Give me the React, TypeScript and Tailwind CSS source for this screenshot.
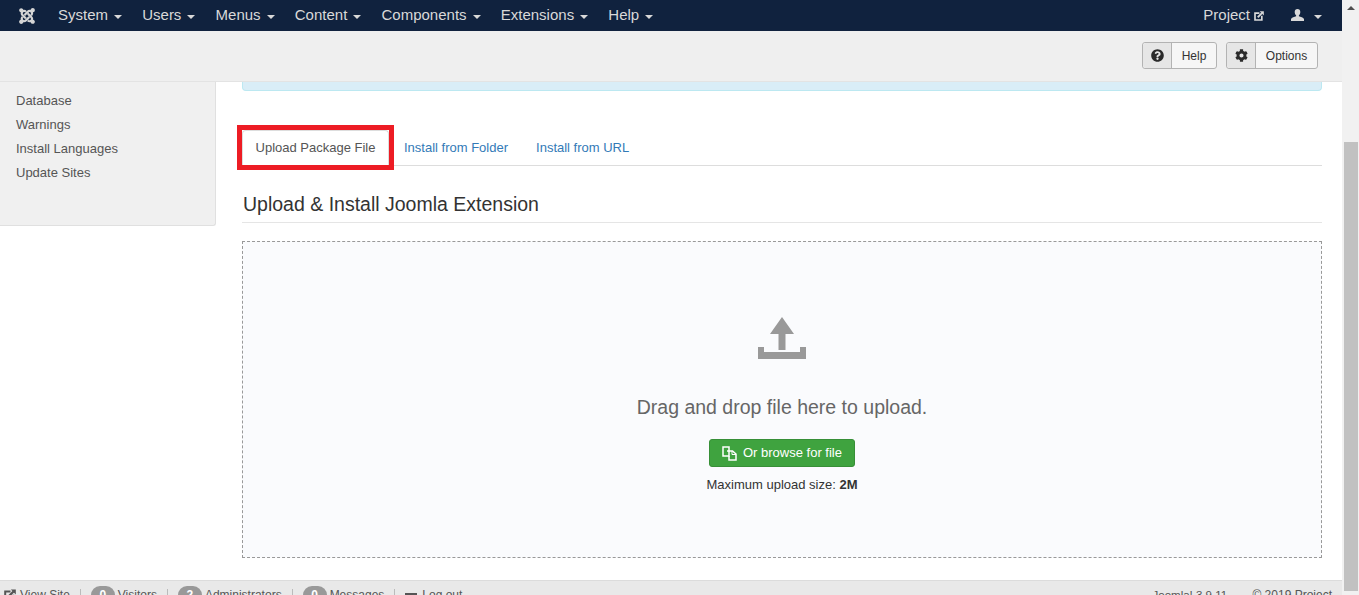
import { FaJoomla, FaQuestionCircle, FaCog } from "react-icons/fa";

function Caret({ className = "" }: { className?: string }) {
  return <span className={`inline-block w-0 h-0 border-x-[4px] border-x-transparent border-t-[4px] ${className}`} />;
}

function NewTab({ className = "", size = 11 }: { className?: string; size?: number }) {
  return (
    <svg width={size} height={size} viewBox="0 0 12 12" className={className} fill="none" stroke="currentColor">
      <path d="M6.5 2.6H1.2v8.2h8.2V5.8" strokeWidth="2" />
      <path d="M4.5 7.5L9.5 2.5" strokeWidth="2.2" />
      <path d="M6.8 0.4h5v5z" fill="currentColor" stroke="none" />
    </svg>
  );
}

function UserGlyph({ className = "" }: { className?: string }) {
  return (
    <svg width="13" height="12" viewBox="0 0 13 12" className={className} fill="currentColor">
      <path d="M6.5 0C4.7 0 3.7 1.2 3.7 3c0 1.4.6 2.6 1.4 3.3v1C3.5 8 .6 8.6 0 10v2h13v-2c-.6-1.4-3.5-2-5.1-2.7v-1C8.7 5.6 9.3 4.4 9.3 3c0-1.8-1-3-2.8-3z" />
    </svg>
  );
}

function CopyGlyph({ className = "" }: { className?: string }) {
  return (
    <svg width="15" height="15" viewBox="0 0 15 15" className={className} fill="none" stroke="currentColor" strokeWidth="1.5">
      <path d="M1 1H7V10H1z" />
      <path d="M5 5H10.5L14 8V14H7V10" />
      <path d="M10 5V8.5H14" strokeWidth="1" />
    </svg>
  );
}

const menus = ["System", "Users", "Menus", "Content", "Components", "Extensions", "Help"];
const sideLinks = ["Database", "Warnings", "Install Languages", "Update Sites"];

function Badge({ n }: { n: string }) {
  return (
    <span className="inline-flex items-center justify-center w-[24px] h-[18px] rounded-[9px] bg-[#999999] text-white text-[12px] font-bold">{n}</span>
  );
}

function Sep() {
  return <span className="w-px h-[12px] bg-[#bbbbbb] mx-[10px]" />;
}

export default function App() {
  return (
    <div className="flex h-[595px] w-[1359px] overflow-hidden bg-white font-['Liberation_Sans',Arial,sans-serif] text-[13px] text-[#333333]">
      <div className="flex flex-col w-[1342px] h-full">
        <nav className="flex items-center h-[31px] shrink-0 bg-[#10223e] text-[#d9d9d9] text-[15px]">
          <FaJoomla className="ml-[18px] mr-[22px] text-[18px] text-[#d5d5d5]" />
          <div className="flex items-center gap-[20.2px]">
            {menus.map((m) => (
              <span key={m} className="flex items-center gap-[6px]">
                {m}
                <Caret className="border-t-[#d9d9d9] mt-[2px]" />
              </span>
            ))}
          </div>
          <div className="ml-auto flex items-center mr-[20px]">
            <span>Project</span>
            <NewTab className="ml-[4px] mt-[1px]" size={10} />
            <UserGlyph className="ml-[27px] -mt-[2px]" />
            <Caret className="border-t-[#d9d9d9] ml-[10px] mt-[2px]" />
          </div>
        </nav>

        <div className="flex items-center justify-end gap-[9px] h-[51px] shrink-0 bg-[#efefef] border-b border-[#e3e3e3] pr-[24px] pb-[1px] text-[12px]">
          <button className="flex items-stretch w-[75px] h-[27px] rounded-[3px] border border-[#b3b3b3] bg-[#f6f6f6] text-[#333333]">
            <span className="flex items-center justify-center w-[29px] bg-[#e6e6e6] border-r border-[#b3b3b3] rounded-l-[3px]">
              <FaQuestionCircle className="text-[13px] text-[#2b2b2b]" />
            </span>
            <span className="flex flex-1 items-center justify-center">Help</span>
          </button>
          <button className="flex items-stretch w-[92px] h-[27px] rounded-[3px] border border-[#b3b3b3] bg-[#f6f6f6] text-[#333333]">
            <span className="flex items-center justify-center w-[29px] bg-[#e6e6e6] border-r border-[#b3b3b3] rounded-l-[3px]">
              <FaCog className="text-[13px] text-[#2b2b2b]" />
            </span>
            <span className="flex flex-1 items-center justify-center">Options</span>
          </button>
        </div>

        <div className="flex flex-1 min-h-0">
          <aside className="w-[216px] h-[144px] shrink-0 bg-[#f0f0f0] border-r border-b border-[#e0e0e0] rounded-br-[3px] pl-[16px] pt-[7px] text-[#555555] leading-[24px]">
            {sideLinks.map((l) => (
              <div key={l}>{l}</div>
            ))}
          </aside>
          <main className="flex-1 min-w-0 flex flex-col pl-[26px] pr-[20px]">
            <div className="h-[9px] shrink-0 bg-[#d9edf7] border border-t-0 border-[#bce8f1] rounded-b-[4px]" />
            <div className="flex items-end h-[75px] shrink-0 border-b border-[#dddddd]">
              <div className="relative h-[36px] w-[147px] pb-[2px] flex items-center justify-center bg-white border border-b-0 border-[#dddddd] rounded-t-[4px] text-[#555555] -mb-px">
                Upload Package File
                <span className="absolute -left-[6px] -top-[6px] w-[157px] h-[45px] border-[5px] border-[#ed1c24]" />
              </div>
              <div className="flex items-center h-[36px] pt-[1px] text-[#337ab7] pl-[15px] gap-[28px]">
                <span>Install from Folder</span>
                <span>Install from URL</span>
              </div>
            </div>
            <h2 className="mt-[25px] pb-[4px] pl-px shrink-0 text-[19.5px] leading-[27px] font-normal text-[#333333] border-b border-[#e5e5e5]">
              Upload &amp; Install Joomla Extension
            </h2>
            <div className="mt-[18px] h-[317px] shrink-0 flex flex-col items-center border border-dashed border-[#999999] bg-[#fafbfd]">
              <svg width="48" height="42" viewBox="0 0 48 42" className="mt-[75px] fill-[#999999]">
                <path d="M24 0L36 17H27.5V33H20.5V17H12z" />
                <path d="M0 30H6V35H42V30H48V42H0z" />
              </svg>
              <div className="mt-[34px] text-[19.5px] leading-[28px] text-[#666666]">Drag and drop file here to upload.</div>
              <button className="mt-[18px] flex items-center justify-center w-[146px] h-[28px] rounded-[3px] bg-[#3fa33f] border border-[#378f37] text-white">
                <CopyGlyph className="mr-[6px]" />
                Or browse for file
              </button>
              <div className="mt-[9px] text-[13px] leading-[18px] text-[#333333]">
                Maximum upload size: <strong>2M</strong>
              </div>
            </div>
          </main>
        </div>

        <footer className="flex items-start justify-between h-[15px] shrink-0 overflow-hidden bg-[#e9e9e9] border-t border-[#dcdcdc] pl-[4px] pr-[10px] pt-[5px] text-[12px] leading-[18px] text-[#555555]">
          <div className="flex items-center">
            <NewTab size={12} />
            <span className="ml-[4px]">View Site</span>
            <Sep />
            <Badge n="0" />
            <span className="ml-[3px]">Visitors</span>
            <Sep />
            <Badge n="2" />
            <span className="ml-[3px]">Administrators</span>
            <Sep />
            <Badge n="0" />
            <span className="ml-[3px]">Messages</span>
            <Sep />
            <span className="w-[12px] h-[9px] bg-[#555555] mt-[4px]" />
            <span className="ml-[5px]">Log out</span>
          </div>
          <div><span className="text-[11.5px]">Joomla! 3.9.11</span> &nbsp;—&nbsp; © 2019 Project</div>
        </footer>
      </div>

      <div className="relative w-[17px] h-full bg-[#f1f1f1] flex flex-col items-center">
        <span className="mt-[6px] w-0 h-0 border-x-[4px] border-x-transparent border-b-[4px] border-b-[#505050]" />
        <span className="mt-[132px] w-[14px] h-[449px] ml-[1px] bg-[#c1c1c1]" />
      </div>
    </div>
  );
}
